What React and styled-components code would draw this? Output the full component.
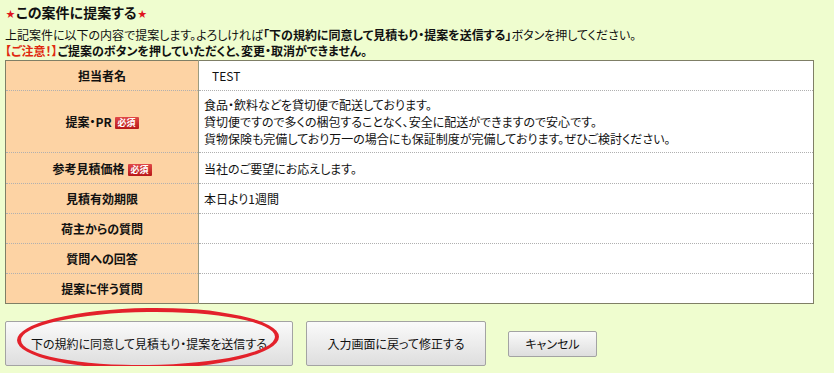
import React from "react";
import styled, { createGlobalStyle } from "styled-components";

const GlobalStyle = createGlobalStyle`
  html, body {
    margin: 0;
    padding: 0;
    background: #effdcf;
  }
  body {
    font-family: "Noto Sans CJK JP", "Liberation Sans", sans-serif;
    font-size: 12px;
    color: #111;
    font-feature-settings: "palt";
  }
`;

const Page = styled.div`
  padding: 2px 5px 0 5px;
  width: 809px;
`;

const Title = styled.h2`
  margin: 0;
  height: 20px;
  display: flex;
  align-items: center;
  font-size: 14px;
  font-weight: bold;
  color: #111;
`;

const Star = styled.span`
  color: #e0141e;
  font-size: 9px;
  margin: 2px 1px 0;
`;

const Lead = styled.p`
  margin: 4px 0 0;
  line-height: 17px;
  font-size: 12px;
`;

const Notice = styled.p`
  margin: 0;
  line-height: 16px;
  font-weight: bold;
`;

const Warn = styled.span`
  color: #e02a10;
`;

const Table = styled.table`
  margin-top: 1px;
  width: 809px;
  border-collapse: collapse;
  border: 1px solid #7f7f66;
  background: #fff;

  tr:not(:first-child) > th,
  tr:not(:first-child) > td {
    border-top: 1px dotted #b0b0b0;
  }
`;

const Row = styled.tr`
  height: ${(p) => p.$h}px;
`;

const Label = styled.th`
  width: 192px;
  background: #fdd3a4;
  border-right: 1px solid #9b9b80;
  font-weight: bold;
  font-size: 12px;
  text-align: center;
  vertical-align: middle;
  padding: 0;
`;

const Value = styled.td`
  padding: 0 6px;
  font-size: 12px;
  line-height: 17px;
  vertical-align: middle;
  padding-left: ${(p) => (p.$indent ? 13 : 5)}px;
`;

const Badge = styled.span`
  display: inline-block;
  margin-left: 3px;
  padding: 0 3px;
  height: 12px;
  line-height: 12px;
  font-size: 9px;
  color: #fff;
  background: linear-gradient(#e04848, #b81818);
  border-radius: 1px;
  vertical-align: 1px;
`;

const Buttons = styled.div`
  display: flex;
  align-items: center;
  gap: 13px;
  margin-top: 17px;
`;

const ButtonWrap = styled.div`
  position: relative;
  display: flex;
`;

const Button = styled.button`
  font-family: "Noto Sans CJK JP", "Liberation Sans", sans-serif;
  font-feature-settings: "palt";
  font-size: 12px;
  color: #111;
  width: ${(p) => p.$w}px;
  height: ${(p) => p.$h}px;
  background: linear-gradient(#fafafa, #dedede);
  border: 1px solid #a3a3a3;
  border-radius: 2px;
  padding: 0;
  margin-left: ${(p) => p.$ml || 0}px;
`;

const Circle = styled.div`
  position: absolute;
  box-sizing: border-box;
  left: 12px;
  top: -13px;
  width: 262px;
  height: 61px;
  border: 4px solid #e3212b;
  border-radius: 50%;
  pointer-events: none;
  transform: rotate(-0.8deg);
`;

const rows = [
  { label: "担当者名", h: 30, value: "TEST", indent: true },
  {
    label: "提案・PR",
    h: 62,
    req: true,
    value: [
      "食品・飲料などを貸切便で配送しております。",
      "貸切便ですので多くの梱包することなく、安全に配送ができますので安心です。",
      "貨物保険も完備しており万一の場合にも保証制度が完備しております。ぜひご検討ください。",
    ],
  },
  { label: "参考見積価格", h: 31, req: true, value: "当社のご要望にお応えします。" },
  { label: "見積有効期限", h: 30, value: "本日より1週間" },
  { label: "荷主からの質問", h: 30, value: "" },
  { label: "質問への回答", h: 30, value: "" },
  { label: "提案に伴う質問", h: 30, value: "" },
];

export default function App() {
  return (
    <>
      <GlobalStyle />
      <Page>
        <Title>
          <Star>★</Star>この案件に提案する<Star>★</Star>
        </Title>
        <Lead>
          上記案件に以下の内容で提案します。よろしければ
          <b>「下の規約に同意して見積もり・提案を送信する」</b>
          ボタンを押してください。
        </Lead>
        <Notice>
          <Warn>【ご注意！】</Warn>ご提案のボタンを押していただくと、変更・取消ができません。
        </Notice>
        <Table>
          <tbody>
            {rows.map((r) => (
              <Row key={r.label} $h={r.h}>
                <Label>
                  {r.label}
                  {r.req && <Badge>必須</Badge>}
                </Label>
                <Value $indent={r.indent}>
                  {Array.isArray(r.value)
                    ? r.value.map((line) => <div key={line}>{line}</div>)
                    : r.value}
                </Value>
              </Row>
            ))}
          </tbody>
        </Table>
        <Buttons>
          <ButtonWrap>
            <Button $w={288} $h={45}>
              下の規約に同意して見積もり・提案を送信する
            </Button>
            <Circle />
          </ButtonWrap>
          <Button $w={180} $h={45}>
            入力画面に戻って修正する
          </Button>
          <Button $w={89} $h={26} $ml={9}>
            キャンセル
          </Button>
        </Buttons>
      </Page>
    </>
  );
}
